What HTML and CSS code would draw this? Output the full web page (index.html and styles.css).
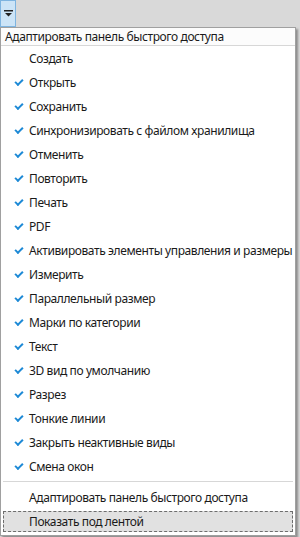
FILE: index.html
```html
<!DOCTYPE html>
<html>
<head>
	<meta charset="utf-8" />
	<title>Панель быстрого доступа</title>
	<link rel="stylesheet" href="styles.css">
</head>
<body>
	<div class="toolbar">
		<div class="qa-button">
			<svg width="9" height="7" viewBox="0 0 9 7">
				<rect x="0" y="0" width="9" height="1.5" fill="#222" />
				<path d="M1 3 L8 3 L4.5 6.5 Z" fill="#222" />
			</svg>
		</div>
	</div>
	<div class="menu">
		<div class="menu-header">Адаптировать панель быстрого доступа</div>
		<ul class="menu-list">
			<li>Создать</li>
			<li class="checked">Открыть</li>
			<li class="checked">Сохранить</li>
			<li class="checked">Синхронизировать с файлом хранилища</li>
			<li class="checked">Отменить</li>
			<li class="checked">Повторить</li>
			<li class="checked">Печать</li>
			<li class="checked">PDF</li>
			<li class="checked">Активировать элементы управления и размеры</li>
			<li class="checked">Измерить</li>
			<li class="checked">Параллельный размер</li>
			<li class="checked">Марки по категории</li>
			<li class="checked">Текст</li>
			<li class="checked">3D вид по умолчанию</li>
			<li class="checked">Разрез</li>
			<li class="checked">Тонкие линии</li>
			<li class="checked">Закрыть неактивные виды</li>
			<li class="checked">Смена окон</li>
		</ul>
		<div class="menu-sep"></div>
		<ul class="menu-list">
			<li>Адаптировать панель быстрого доступа</li>
			<li class="focused">Показать под лентой</li>
		</ul>
	</div>
</body>
</html>
```

FILE: styles.css
```css
body{
	margin: 0;
	background-color: #d9d9d9;
	font-family: "Noto Sans", "Open Sans", sans-serif;
	font-size: 12px;
	letter-spacing: -0.4px;
	color: #1a1a1a;
	width: 300px;
	height: 537px;
	overflow: hidden;
}
ul,li{
	margin: 0;
	padding: 0;
	list-style: none;
}
.toolbar{
	height: 27px;
}
.qa-button{
	width: 14px;
	height: 25px;
	border: 1px solid #7eb4e0;
	background-color: #cce4f7;
	display: flex;
	align-items: center;
	justify-content: center;
}
.menu{
	width: 294px;
	border: 1px solid #a0a0a0;
	background-color: #fff;
	box-shadow: 2px 2px 2px rgba(0,0,0,0.35);
	padding-bottom: 2px;
}
.menu-header{
	height: 17px;
	line-height: 17px;
	padding-left: 4px;
	background-color: #fcfcfc;
	border-bottom: 1px solid #d7d7d7;
}
.menu-list li{
	position: relative;
	height: 24px;
	line-height: 25px;
	padding-left: 28px;
	white-space: nowrap;
}
.menu-list .checked::before{
	content: "";
	position: absolute;
	left: 14px;
	top: 9px;
	width: 6px;
	height: 3px;
	border-left: 2px solid #1e8ad6;
	border-bottom: 2px solid #1e8ad6;
	transform: rotate(-45deg);
}
.menu-sep{
	height: 1px;
	margin: 3px 2px 3px 2px;
	background-color: #d7d7d7;
}
.menu-list .focused{
	margin: 2px 2px 1px 2px;
	height: 19px;
	line-height: 20px;
	padding-left: 25px;
	background-color: #e1e1e1;
	border: 1px dashed #6d6d6d;
}
```
